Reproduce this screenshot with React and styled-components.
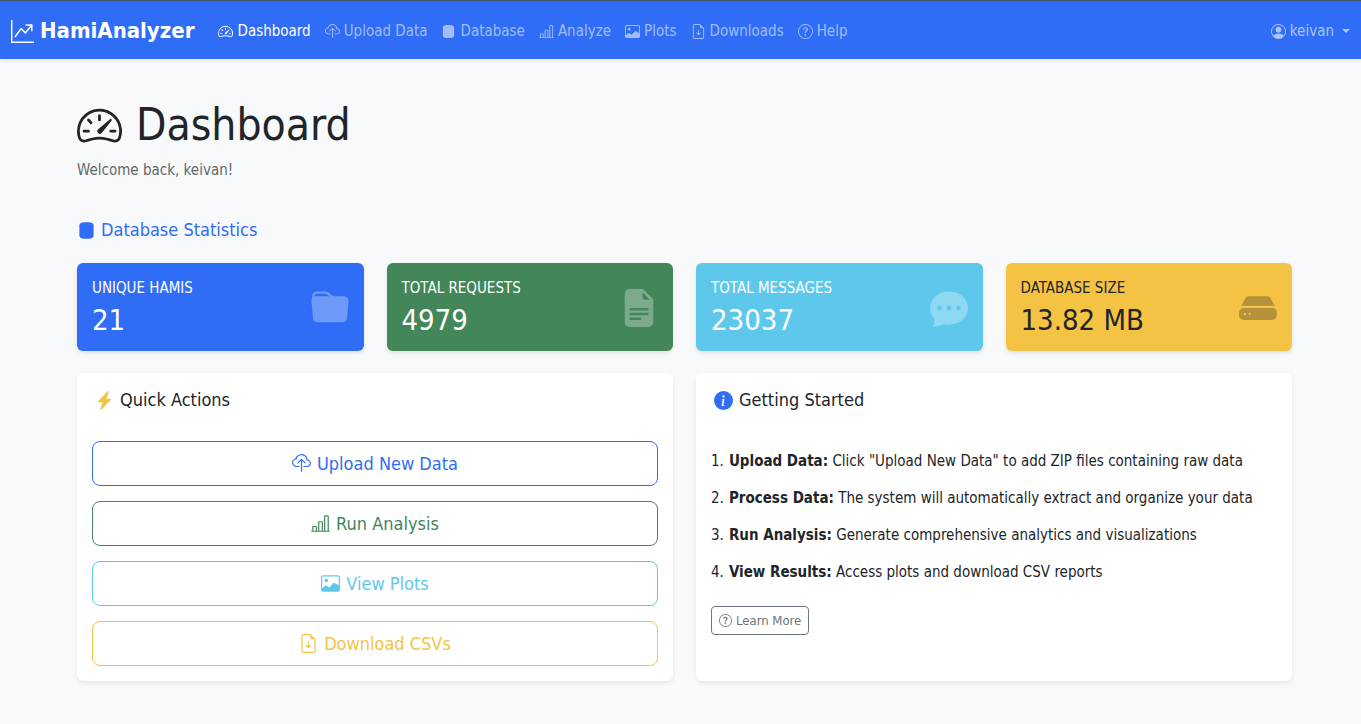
import React from "react";
import styled, { createGlobalStyle, css } from "styled-components";
import {
  BsGraphUpArrow,
  BsSpeedometer2,
  BsCloudUpload,
  BsBarChartLine,
  BsImage,
  BsFileEarmarkArrowDown,
  BsQuestionCircle,
  BsPersonCircle,
  BsFolderFill,
  BsFileEarmarkTextFill,
  BsChatDotsFill,
  BsHddFill,
  BsLightningChargeFill,
  BsInfoCircleFill,
} from "react-icons/bs";

const colors = {
  primary: "#306df6",
  success: "#42865a",
  info: "#5ec8ec",
  warning: "#f5c344",
  ink: "#212529",
  muted: "#6c757d",
  page: "#f8f9fb",
};

const GlobalStyle = createGlobalStyle`
  *, *::before, *::after { box-sizing: border-box; }
  body {
    margin: 0;
    background: ${colors.page};
    color: ${colors.ink};
    font-family: Tahoma, "DejaVu Sans Condensed", "DejaVu Sans", sans-serif;
    font-size: 15px;
    line-height: 22px;
  }
  h1, h2, p, ol, ul { margin: 0; padding: 0; font-weight: 400; }
  a { text-decoration: none; color: inherit; }
  button { font: inherit; cursor: pointer; }
  svg { flex: none; display: block; }
`;

const Navbar = styled.nav`
  display: flex;
  align-items: center;
  height: 59px;
  padding: 2px 11px 0;
  border-top: 1px solid #44546f;
  background: ${colors.primary};
  color: #fff;
  box-shadow: 0 2px 4px rgba(0, 0, 0, 0.08);
`;

const Brand = styled.a`
  display: flex;
  align-items: center;
  gap: 6px;
  margin-right: 24px;
  font-size: 22px;
  line-height: 34px;
  font-weight: 700;
`;

const NavList = styled.ul`
  display: flex;
  gap: 14px;
  list-style: none;
`;

const NavLink = styled.a`
  display: flex;
  align-items: center;
  gap: 4px;
  color: ${(p) => (p.$active ? "#fff" : "rgba(255, 255, 255, 0.55)")};
`;

const UserButton = styled.button`
  display: flex;
  align-items: center;
  gap: 4px;
  margin-left: auto;
  padding: 0;
  border: 0;
  background: none;
  color: rgba(255, 255, 255, 0.6);
`;

const Caret = styled.span`
  margin-left: 4px;
  border-top: 4px solid currentColor;
  border-left: 4px solid transparent;
  border-right: 4px solid transparent;
`;

const Page = styled.main`
  padding: 39px 11px 43px 19px;
`;

const Container = styled.div`
  max-width: 1215px;
  margin: 0 auto;
`;

const PageTitle = styled.h1`
  display: flex;
  align-items: center;
  gap: 14px;
  font-size: 44px;
  line-height: 54px;
`;

const Welcome = styled.p`
  margin-top: 7px;
  color: #64676b;
`;

const SectionTitle = styled.h2`
  display: flex;
  align-items: center;
  gap: 5px;
  margin: 37px 0 21px;
  color: ${colors.primary};
  font-size: 18px;
  line-height: 24px;
`;

const StatGrid = styled.div`
  display: grid;
  grid-template-columns: repeat(4, 1fr);
  gap: 23px;
`;

const StatCard = styled.section`
  display: flex;
  align-items: center;
  justify-content: space-between;
  padding: 13px 15px 11px;
  height: 88px;
  border-radius: 6px;
  background: ${(p) => colors[p.$tone]};
  color: ${(p) => (p.$dark ? colors.ink : "#fff")};
  box-shadow: 0 2px 4px rgba(0, 0, 0, 0.1);

  svg { opacity: 0.3; }
`;

const StatLabel = styled.p`
  line-height: 24px;
  text-transform: uppercase;
`;

const StatValue = styled.p`
  font-size: 29px;
  line-height: 40px;
`;

const PanelGrid = styled.div`
  display: grid;
  grid-template-columns: 1fr 1fr;
  gap: 23px;
  margin-top: 22px;
`;

const Panel = styled.section`
  padding: 15px;
  border-radius: 6px;
  background: #fff;
  box-shadow: 0 2px 4px rgba(0, 0, 0, 0.08);
`;

const PanelTitle = styled.h2`
  display: flex;
  align-items: center;
  gap: 6px;
  padding-left: 3px;
  font-size: 18px;
  line-height: 24px;

  svg { color: ${(p) => colors[p.$tone]}; }
`;

const Actions = styled.div`
  display: grid;
  gap: 15px;
  margin-top: 29px;
`;

const buttonBase = css`
  display: flex;
  align-items: center;
  justify-content: center;
  background: none;
  border: 1px solid currentColor;
`;

const ActionButton = styled.button`
  ${buttonBase}
  gap: 6px;
  height: 45px;
  border-radius: 8px;
  color: ${(p) => colors[p.$tone]};
  font-size: 18px;
`;

const Steps = styled.ol`
  display: grid;
  gap: 15px;
  margin-top: 38px;
  list-style: none;
`;

const Step = styled.li`
  display: flex;
  gap: 5px;
`;

const LearnMore = styled.button`
  ${buttonBase}
  gap: 4px;
  height: 29px;
  margin-top: 23px;
  padding: 0 7px;
  border-radius: 4px;
  color: ${colors.muted};
  font-size: 13px;
`;

function DatabaseIcon({ size }) {
  return (
    <svg width={size} height={size} viewBox="0 0 16 16" fill="currentColor" aria-hidden="true">
      <path d="M2 3.500C2 2 4 1 6 1h4c2 0 4 1 4 2.500v9c0 1.500-2 2.500-4 2.500H6c-2 0-4-1-4-2.500z" />
    </svg>
  );
}

const navItems = [
  { label: "Dashboard", Icon: BsSpeedometer2, active: true },
  { label: "Upload Data", Icon: BsCloudUpload },
  { label: "Database", Icon: DatabaseIcon },
  { label: "Analyze", Icon: BsBarChartLine },
  { label: "Plots", Icon: BsImage },
  { label: "Downloads", Icon: BsFileEarmarkArrowDown },
  { label: "Help", Icon: BsQuestionCircle },
];

const stats = [
  { label: "Unique Hamis", value: "21", tone: "primary", Icon: BsFolderFill },
  { label: "Total Requests", value: "4979", tone: "success", Icon: BsFileEarmarkTextFill },
  { label: "Total Messages", value: "23037", tone: "info", Icon: BsChatDotsFill },
  { label: "Database Size", value: "13.82 MB", tone: "warning", Icon: BsHddFill, dark: true },
];

const actions = [
  { label: "Upload New Data", tone: "primary", Icon: BsCloudUpload },
  { label: "Run Analysis", tone: "success", Icon: BsBarChartLine },
  { label: "View Plots", tone: "info", Icon: BsImage },
  { label: "Download CSVs", tone: "warning", Icon: BsFileEarmarkArrowDown },
];

const steps = [
  ["Upload Data:", 'Click "Upload New Data" to add ZIP files containing raw data'],
  ["Process Data:", "The system will automatically extract and organize your data"],
  ["Run Analysis:", "Generate comprehensive analytics and visualizations"],
  ["View Results:", "Access plots and download CSV reports"],
];

export default function App() {
  return (
    <>
      <GlobalStyle />
      <Navbar>
        <Brand href="#">
          <BsGraphUpArrow size={23} />
          HamiAnalyzer
        </Brand>
        <NavList>
          {navItems.map(({ label, Icon, active }) => (
            <li key={label}>
              <NavLink href="#" $active={active}>
                <Icon size={15} />
                {label}
              </NavLink>
            </li>
          ))}
        </NavList>
        <UserButton type="button">
          <BsPersonCircle size={15} />
          keivan
          <Caret />
        </UserButton>
      </Navbar>
      <Page>
        <Container>
          <PageTitle>
            <BsSpeedometer2 size={45} />
            Dashboard
          </PageTitle>
          <Welcome>Welcome back, keivan!</Welcome>
          <SectionTitle>
            <DatabaseIcon size={19} />
            Database Statistics
          </SectionTitle>
          <StatGrid>
            {stats.map(({ label, value, tone, Icon, dark }) => (
              <StatCard key={label} $tone={tone} $dark={dark}>
                <div>
                  <StatLabel>{label}</StatLabel>
                  <StatValue>{value}</StatValue>
                </div>
                <Icon size={38} />
              </StatCard>
            ))}
          </StatGrid>
          <PanelGrid>
            <Panel>
              <PanelTitle $tone="warning">
                <BsLightningChargeFill size={19} />
                Quick Actions
              </PanelTitle>
              <Actions>
                {actions.map(({ label, tone, Icon }) => (
                  <ActionButton key={label} type="button" $tone={tone}>
                    <Icon size={19} />
                    {label}
                  </ActionButton>
                ))}
              </Actions>
            </Panel>
            <Panel>
              <PanelTitle $tone="primary">
                <BsInfoCircleFill size={19} />
                Getting Started
              </PanelTitle>
              <Steps>
                {steps.map(([name, text], i) => (
                  <Step key={name}>
                    <span>{i + 1}.</span>
                    <span>
                      <strong>{name}</strong> {text}
                    </span>
                  </Step>
                ))}
              </Steps>
              <LearnMore type="button">
                <BsQuestionCircle size={13} />
                Learn More
              </LearnMore>
            </Panel>
          </PanelGrid>
        </Container>
      </Page>
    </>
  );
}
